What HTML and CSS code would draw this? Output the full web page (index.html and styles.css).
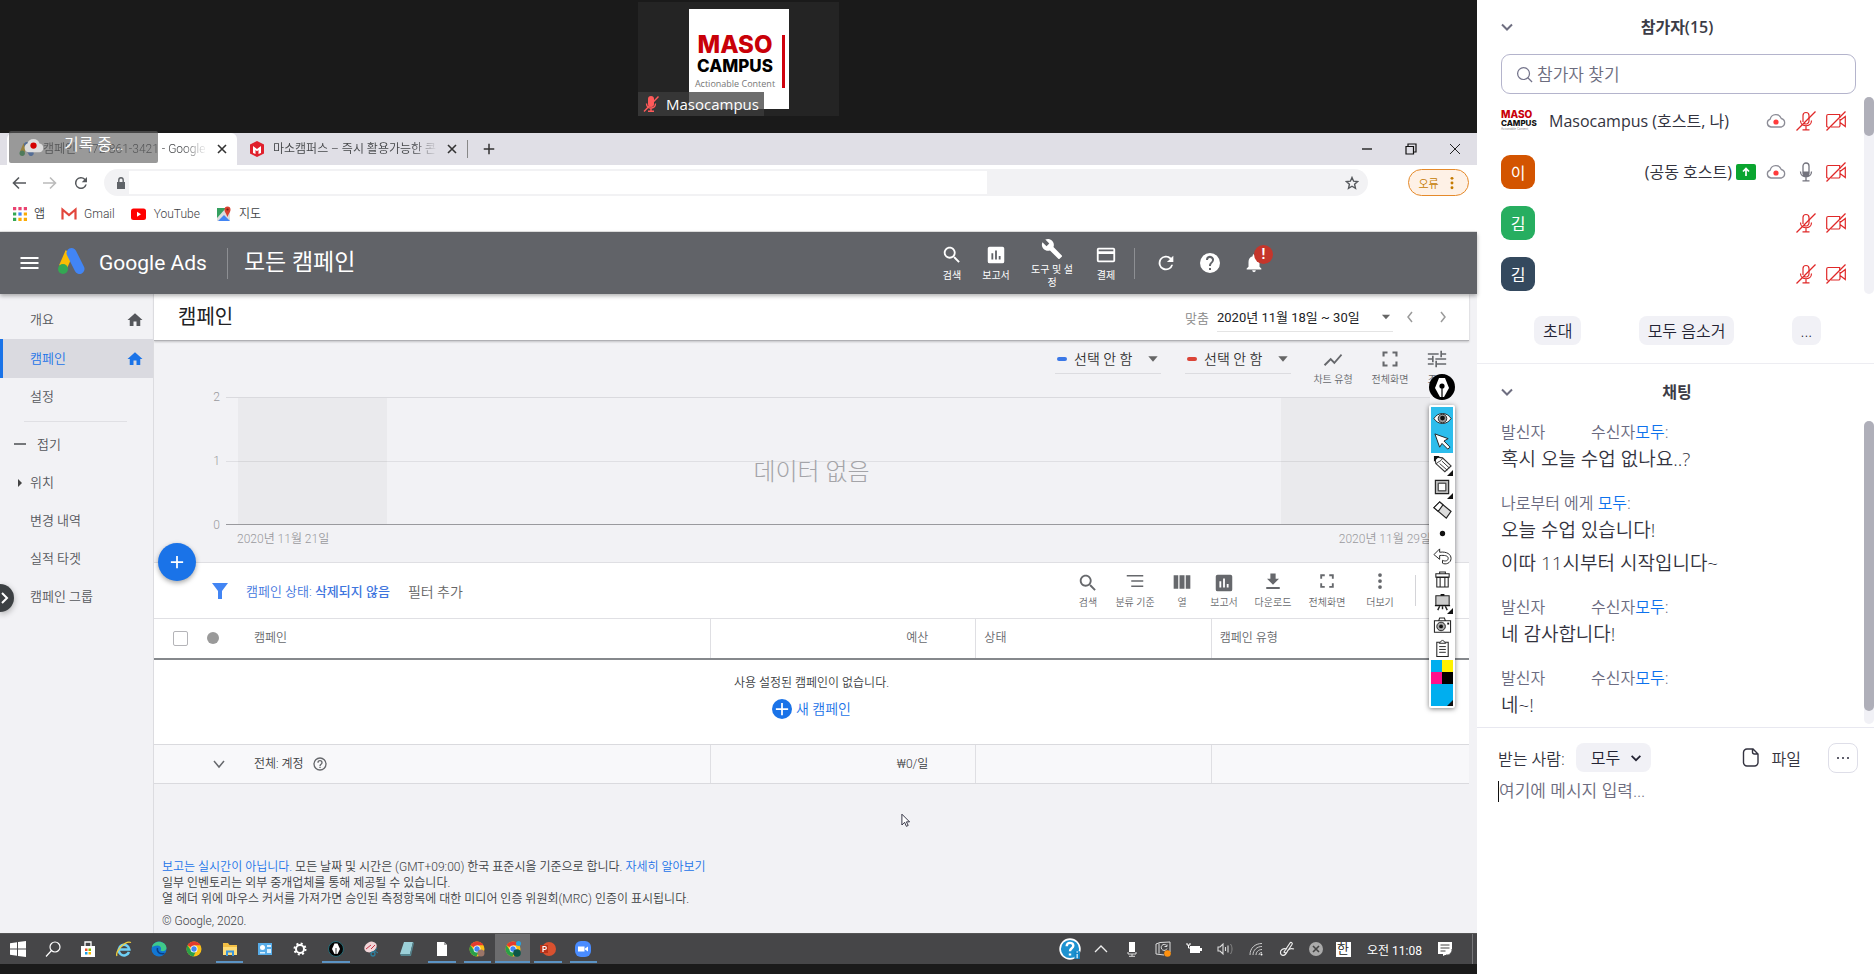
FILE: index.html
```html
<!DOCTYPE html>
<html lang="ko">
<head>
<meta charset="utf-8">
<title>Masocampus</title>
<link rel="stylesheet" href="styles.css">
</head>
<body>
<svg class="defs" aria-hidden="true">
  <symbol id="i-search" viewBox="0 0 24 24"><path d="M15.500 14h-.79l-.28-.27C15.410 12.590 16 11.110 16 9.500 16 5.910 13.090 3 9.500 3S3 5.910 3 9.500 5.910 16 9.500 16c1.610 0 3.090-.59 4.230-1.570l.27.28v.79l5 4.990L20.490 19l-4.990-5zm-6 0C7.010 14 5 11.990 5 9.500S7.010 5 9.500 5 14 7.010 14 9.500 11.990 14 9.500 14z"/></symbol>
  <symbol id="i-report" viewBox="0 0 24 24"><path d="M19 3H5a2 2 0 0 0-2 2v14a2 2 0 0 0 2 2h14a2 2 0 0 0 2-2V5a2 2 0 0 0-2-2zM9 17H7v-7h2v7zm4 0h-2V7h2v10zm4 0h-2v-4h2v4z"/></symbol>
  <symbol id="i-wrench" viewBox="0 0 24 24"><path d="M22.7 19l-9.1-9.1c.9-2.3.4-5-1.5-6.9-2-2-5-2.4-7.4-1.3L9 6 6 9 1.6 4.7C.4 7.1.9 10.1 2.9 12.1c1.9 1.9 4.6 2.4 6.9 1.5l9.1 9.1c.4.4 1 .4 1.4 0l2.3-2.3c.5-.4.5-1.1.1-1.4z"/></symbol>
  <symbol id="i-card" viewBox="0 0 24 24"><path d="M20 4H4a2 2 0 0 0-2 2v12a2 2 0 0 0 2 2h16a2 2 0 0 0 2-2V6a2 2 0 0 0-2-2zm0 14H4v-7h16v7zm0-10H4V6h16v2z"/></symbol>
  <symbol id="i-refresh" viewBox="0 0 24 24"><path d="M17.65 6.35A8 8 0 1 0 19.73 14h-2.08A6 6 0 1 1 12 6c1.66 0 3.14.69 4.22 1.78L13 11h7V4l-2.35 2.35z"/></symbol>
  <symbol id="i-help" viewBox="0 0 24 24"><path d="M12 2a10 10 0 1 0 0 20 10 10 0 0 0 0-20zm1 17h-2v-2h2v2zm2.07-7.75l-.9.92C13.45 12.9 13 13.5 13 15h-2v-.5c0-1.1.45-2.1 1.17-2.83l1.24-1.26A2 2 0 1 0 10 9H8a4 4 0 1 1 7.07 2.25z"/></symbol>
  <symbol id="i-helpo" viewBox="0 0 24 24"><path d="M11 18h2v-2h-2v2zm1-16a10 10 0 1 0 0 20 10 10 0 0 0 0-20zm0 18a8 8 0 1 1 0-16 8 8 0 0 1 0 16zm0-14a4 4 0 0 0-4 4h2a2 2 0 1 1 4 0c0 2-3 1.75-3 5h2c0-2.25 3-2.5 3-5a4 4 0 0 0-4-4z"/></symbol>
  <symbol id="i-bell" viewBox="0 0 24 24"><path d="M12 22a2 2 0 0 0 2-2h-4a2 2 0 0 0 2 2zm6-6v-5c0-3.07-1.64-5.64-4.5-6.32V4a1.5 1.5 0 0 0-3 0v.68C7.63 5.36 6 7.92 6 11v5l-2 2v1h16v-1l-2-2z"/></symbol>
  <symbol id="i-home" viewBox="0 0 24 24"><path d="M10 20v-6h4v6h5v-8h3L12 3 2 12h3v8z"/></symbol>
  <symbol id="i-down" viewBox="0 0 24 24"><path d="M5 8l7 8 7-8z"/></symbol>
  <symbol id="i-chev" viewBox="0 0 16 16"><path d="M3 5.500l5 5 5-5" fill="none" stroke="currentColor" stroke-width="2"/></symbol>
  <symbol id="i-line" viewBox="0 0 24 24"><path d="M3.500 18.500l6-6 4 4L22 6.900 20.600 5.500l-7.100 8-4-4L2 17z"/></symbol>
  <symbol id="i-full" viewBox="0 0 24 24"><path d="M3 9V3h6v2.500H5.500V9zM15 3h6v6h-2.500V5.500H15zM3 15h2.500v3.500H9V21H3zM18.500 15H21v6h-6v-2.500h3.500z"/></symbol>
  <symbol id="i-tune" viewBox="0 0 24 24"><path d="M1 5h13v2H1zM16 2h2v8h-2zM18 5h5v2h-5zM1 11h5v2H1zM6 8h2v8H6zM10 11h13v2H10zM1 17h7v2H1zM10 14h2v8h-2zM12 17h11v2H12z"/></symbol>
  <symbol id="i-seg" viewBox="0 0 24 24"><path d="M1 4h22v2H1zM7 11h16v2H7zM7 18h16v2H7z"/></symbol>
  <symbol id="i-cols" viewBox="0 0 24 24"><path d="M2 4h5.500v16H2zM9 4h6v16H9zM16.500 4H22v16h-5.500z"/></symbol>
  <symbol id="i-dl" viewBox="0 0 24 24"><path d="M20 9h-4.500V2h-7v7H4l8 8zM3 20v2.500h18V20z"/></symbol>
  <symbol id="i-more" viewBox="0 0 24 24"><circle cx="12" cy="4" r="2.500"/><circle cx="12" cy="12" r="2.500"/><circle cx="12" cy="20" r="2.500"/></symbol>
  <symbol id="i-x" viewBox="0 0 12 12"><path d="M2 2l8 8M10 2l-8 8" fill="none" stroke="currentColor" stroke-width="1.600"/></symbol>
  <symbol id="i-plus" viewBox="0 0 16 16"><path d="M8 1v14M1 8h14" fill="none" stroke="currentColor" stroke-width="2"/></symbol>
  <symbol id="i-ads" viewBox="0 0 30 28"><path d="M12.500 5L6 20" stroke="#fbbc04" stroke-width="8.500"/><circle cx="6" cy="22" r="5" fill="#34a853"/><path d="M14.500 6l8 16" stroke="#4285f4" stroke-width="10" stroke-linecap="round"/></symbol>
  <symbol id="i-cloud" viewBox="0 0 20 16"><path d="M5 14a4 4 0 0 1-.8-7.800A5.800 5.800 0 0 1 15.300 5.500 4.400 4.400 0 0 1 15.500 14z" fill="#fff" stroke="#8c8c96" stroke-width="1.300"/><circle cx="10" cy="9" r="2.600" fill="#ff3b3b"/></symbol>
  <symbol id="i-micoff" viewBox="0 0 20 20"><g fill="none" stroke="#e02828" stroke-width="1.200"><path d="M7 11V4.500a3 3 0 0 1 6 0V10a3 3 0 0 1-5 2.200M4.500 9.500c0 7 11 7 11 0M10 15v3.500M6.500 18.800h7"/><path d="M.5 19.500L19.500.5"/></g></symbol>
  <symbol id="i-mic" viewBox="0 0 20 20"><path d="M7 9.500h6V11a3 3 0 0 1-6 0z" fill="#73737d"/><path d="M7 4a3 3 0 0 1 6 0v7a3 3 0 0 1-6 0zM4.500 9.500c0 7 11 7 11 0M10 15v3.500M6.500 18.800h7" fill="none" stroke="#73737d" stroke-width="1.300"/></symbol>
  <symbol id="i-camoff" viewBox="0 0 20 20"><g fill="none" stroke="#e02828" stroke-width="1.200"><path d="M2.500 16.500L.7 15.500V5a1.500 1.500 0 0 1 1.500-1.500h11.500V7M14 8v6.500a1.500 1.500 0 0 1-1.500 1.500H5M14 9.500l5.300-4v10L14 11.500"/><path d="M.5 19.500L19.500.5"/></g></symbol>
  <symbol id="i-chrome" viewBox="0 0 16 16"><circle cx="8" cy="8" r="7.500" fill="#fbc116"/><path d="M8 8L1.500 4.200A7.500 7.500 0 0 1 14.500 4.200H8z" fill="#e33b2e"/><path d="M1.500 4.200A7.500 7.500 0 0 0 7.500 15.500L10.500 9 8 8H4z" fill="#2a9f48"/><circle cx="8" cy="8" r="3.500" fill="#fff"/><circle cx="8" cy="8" r="2.700" fill="#4285f4"/></symbol>
</svg>

<div class="meeting">
  <main class="stage">
    <header class="gallery">
      <figure class="tile">
        <div class="logo"><b>MASO</b><strong>CAMPUS</strong><small>Actionable Content</small><i></i></div>
        <figcaption><svg viewBox="0 0 16 16"><path d="M5 3a3 3 0 0 1 6 0v5a3 3 0 0 1-6 0z" fill="#ff5a5a"/><path d="M3.500 7.500c0 6 9 6 9 0M8 12v3M5 15.200h6M1 15.500L15.500.5" fill="none" stroke="#ff5a5a" stroke-width="1.400"/></svg>Masocampus</figcaption>
      </figure>
    </header>

    <section class="screen">
      <div class="recording"><svg class="rec-ic" viewBox="0 0 20 16"><path d="M5 15a4.500 4.500 0 0 1-.8-8.500 6 6 0 0 1 11.500 0A4.300 4.300 0 0 1 15.500 15z" fill="#ddd"/><circle cx="10" cy="8.500" r="3" fill="#d50000"/></svg><span>기록 중...</span></div>

      <div class="tabs">
        <div class="tab active"><svg class="s16"><use href="#i-ads"/></svg><span class="tab-name">캠페인 - 172-861-3421 - Google</span><button aria-label="탭 닫기"><svg class="s12"><use href="#i-x"/></svg></button></div>
        <div class="tab"><svg class="s16" viewBox="0 0 16 16"><path d="M8 0l7 3.500v9L8 16l-7-3.500v-9z" fill="#e0202c"/><path d="M4 12V5l4 3 4-3v7l-2.500 1V9L8 10.200 6.500 9v4z" fill="#fff"/></svg><span class="tab-name">마소캠퍼스 – 즉시 활용가능한 콘</span><button aria-label="탭 닫기"><svg class="s12"><use href="#i-x"/></svg></button></div>
        <button class="newtab" aria-label="새 탭"><svg class="s12"><use href="#i-plus"/></svg></button>
        <div class="winctl">
          <button aria-label="최소화"><svg class="s12" viewBox="0 0 12 12"><path d="M1 6h10" stroke="#111" stroke-width="1.300"/></svg></button>
          <button aria-label="복원"><svg class="s12" viewBox="0 0 12 12"><path d="M1 3.500h7.500V11H1zM3 3.500V1h8v8H8.500" fill="none" stroke="#111" stroke-width="1.200"/></svg></button>
          <button aria-label="닫기"><svg class="s12" viewBox="0 0 12 12"><path d="M1 1l10 10M11 1L1 11" stroke="#222"/></svg></button>
        </div>
      </div>

      <div class="toolbar">
        <button aria-label="뒤로"><svg class="s14" viewBox="0 0 14 14"><path d="M14 7H2M7 1.500L1.500 7 7 12.500" fill="none" stroke="#55585c" stroke-width="1.600"/></svg></button>
        <button aria-label="앞으로"><svg class="s14" viewBox="0 0 14 14"><path d="M0 7h12M7 1.500L12.500 7 7 12.500" fill="none" stroke="#bbb" stroke-width="1.600"/></svg></button>
        <button aria-label="새로고침"><svg class="s18 grey"><use href="#i-refresh"/></svg></button>
        <div class="address"><svg class="s12" viewBox="0 0 12 12"><path d="M2 5h8v7H2z" fill="#5f6368"/><path d="M3.800 5V3a2.200 2.200 0 0 1 4.400 0v2" fill="none" stroke="#5f6368" stroke-width="1.400"/></svg><input aria-label="주소"><button aria-label="북마크"><svg class="s14" viewBox="0 0 14 14"><path d="M7 1.500l1.600 3.700 4 .4-3 2.700.9 4L7 10.200l-3.500 2.100.9-4-3-2.700 4-.4z" fill="none" stroke="#55585c" stroke-width="1.400"/></svg></button></div>
        <button class="error">오류<svg class="s14"><use href="#i-more"/></svg></button>
      </div>

      <nav class="bookmarks">
        <a href="#"><svg class="s14" viewBox="0 0 13 13"><path d="M0 0h3v3H0zM5 0h3v3H5zM10 0h3v3h-3z" fill="#ea4370"/><path d="M0 5h3v3H0zM0 10h3v3H0z" fill="#34a853"/><path d="M5 5h3v3H5z" fill="#4285f4"/><path d="M10 5h3v3h-3zM5 10h3v3H5zM10 10h3v3h-3z" fill="#fbab04"/></svg>앱</a>
        <a href="#"><svg class="s16" viewBox="0 0 16 16"><path d="M1.500 13.500v-10L8 9l6.500-5.500v10" fill="none" stroke="#e2463c" stroke-width="2.200"/></svg>Gmail</a>
        <a href="#"><svg class="s16" viewBox="0 0 16 16"><rect x="0" y="2.500" width="15" height="11.500" rx="2.500" fill="#f00"/><path d="M6 5.700v5l4-2.500z" fill="#fff"/></svg>YouTube</a>
        <a href="#"><svg class="s16" viewBox="0 0 16 16"><path d="M1 2h13v13H1z" fill="#ddd"/><path d="M1 2h9L1 12z" fill="#34a060"/><path d="M2 15l6-6 6 6z" fill="#4285f4"/><path d="M11.500 11C10 7 8.500 6 8.500 3.500a3 3 0 0 1 6 0C14.500 6 13 7 11.500 11z" fill="#d9402f"/><circle cx="11.500" cy="3.500" r="1.100" fill="#7c1c12"/></svg>지도</a>
      </nav>

      <header class="ads-head">
        <button aria-label="메뉴"><svg class="burger" viewBox="0 0 18 14"><path d="M0 2h18M0 7h18M0 12h18" stroke="#fff" stroke-width="2"/></svg></button>
        <svg class="adslogo"><use href="#i-ads"/></svg>
        <span class="brand">Google Ads</span>
        <span class="vr"></span>
        <h1>모든 캠페인</h1>
        <div class="tools">
          <button class="t-a"><svg class="s22"><use href="#i-search"/></svg>검색</button>
          <button class="t-a"><svg class="s22"><use href="#i-report"/></svg>보고서</button>
          <button class="t-b"><svg class="s22"><use href="#i-wrench"/></svg>도구 및 설정</button>
          <button class="t-c"><svg class="s22"><use href="#i-card"/></svg>결제</button>
          <span class="vr"></span>
          <button class="t-a" aria-label="새로고침"><svg class="s22"><use href="#i-refresh"/></svg></button>
          <button class="t-a" aria-label="도움말"><svg class="s24"><use href="#i-help"/></svg></button>
          <button class="t-a bell" aria-label="알림"><svg class="s22"><use href="#i-bell"/></svg><b>!</b></button>
        </div>
      </header>

      <div class="workspace">
        <nav class="side">
          <a href="#">개요<svg class="s18"><use href="#i-home"/></svg></a>
          <a href="#" class="on">캠페인<svg class="s18"><use href="#i-home"/></svg></a>
          <a href="#">설정</a>
          <hr>
          <a href="#" class="fold"><svg class="s12" viewBox="0 0 12 12"><path d="M0 5h12" stroke="#55585c" stroke-width="1.600"/></svg>접기</a>
          <a href="#" class="sub"><svg class="s8" viewBox="0 0 8 8"><path d="M2 0l4 4-4 4z" fill="#444"/></svg>위치</a>
          <a href="#">변경 내역</a>
          <a href="#">실적 타겟</a>
          <a href="#">캠페인 그룹</a>
          <button class="handle" aria-label="펼치기"><svg class="s14" viewBox="0 0 14 14"><path d="M2 2l5 5-5 5" fill="none" stroke="#fff" stroke-width="2"/></svg></button>
        </nav>

        <div class="content">
          <div class="pagebar">
            <h2>캠페인</h2>
            <span class="custom">맞춤</span>
            <button class="range">2020년 11월 18일 ~ 30일<svg class="s14"><use href="#i-down"/></svg></button>
            <button class="step" aria-label="이전"><svg class="s14" viewBox="0 0 14 14"><path d="M9 2L5 7l4 5" fill="none" stroke="#9a9a9a" stroke-width="1.500"/></svg></button>
            <button class="step" aria-label="다음"><svg class="s14" viewBox="0 0 14 14"><path d="M5 2l4 5-4 5" fill="none" stroke="#9a9a9a" stroke-width="1.500"/></svg></button>
          </div>

          <section class="chart">
            <div class="chart-tools">
              <label class="pick"><i class="blue"></i><select aria-label="측정항목 1"><option>선택 안 함</option></select><svg class="s16"><use href="#i-down"/></svg></label>
              <label class="pick"><i class="red"></i><select aria-label="측정항목 2"><option>선택 안 함</option></select><svg class="s16"><use href="#i-down"/></svg></label>
              <button class="w56"><svg class="s22"><use href="#i-line"/></svg>차트 유형</button>
              <button class="w58"><svg class="s20"><use href="#i-full"/></svg>전체화면</button>
              <button class="w36"><svg class="s20"><use href="#i-tune"/></svg>조정</button>
            </div>
            <div class="plot-row">
              <div class="yaxis"><span>2</span><span>1</span><span>0</span></div>
              <div class="plot"><div class="shade"></div><div class="shade"></div></div>
            </div>
            <div class="xaxis"><span>2020년 11월 21일</span><span>2020년 11월 29일</span></div>
            <p class="nodata">데이터 없음</p>
            <button class="fab" aria-label="추가"><svg class="s14"><use href="#i-plus"/></svg></button>
          </section>

          <div class="filterbar">
            <svg class="s16" viewBox="0 0 16 16"><path d="M0 0h16L10 8v8H6V8z" fill="#4285f4"/></svg>
            <a href="#" class="status">캠페인 상태: <b>삭제되지 않음</b></a>
            <button class="addfilter">필터 추가</button>
            <div class="tt">
              <button class="w44"><svg class="s22"><use href="#i-search"/></svg>검색</button>
              <button class="w50"><svg class="s18"><use href="#i-seg"/></svg>분류 기준</button>
              <button class="w44"><svg class="s20"><use href="#i-cols"/></svg>열</button>
              <button class="w40"><svg class="s22"><use href="#i-report"/></svg>보고서</button>
              <button class="w58"><svg class="s18"><use href="#i-dl"/></svg>다운로드</button>
              <button class="w50"><svg class="s18"><use href="#i-full"/></svg>전체화면</button>
              <button class="w56"><svg class="s18"><use href="#i-more"/></svg>더보기</button>
              <span class="vr"></span>
            </div>
          </div>

          <table>
            <colgroup><col class="c1"><col class="c2"><col class="c3"><col></colgroup>
            <thead><tr><th><div class="namecell"><input type="checkbox" aria-label="모두 선택"><i class="dot"></i>캠페인</div></th><th class="num">예산</th><th>상태</th><th>캠페인 유형</th></tr></thead>
            <tbody><tr class="empty"><td colspan="4">사용 설정된 캠페인이 없습니다.<a href="#"><i><svg class="s14"><use href="#i-plus"/></svg></i>새 캠페인</a></td></tr></tbody>
            <tfoot><tr><td><div class="totalcell"><svg class="s16" viewBox="0 0 16 16"><path d="M3 5l5 6 5-6" fill="none" stroke="#66686c" stroke-width="1.500"/></svg><span>전체: 계정</span><svg class="s16"><use href="#i-helpo"/></svg></div></td><td class="num">₩0/일</td><td></td><td></td></tr></tfoot>
          </table>

          <footer class="notes">
            <p><a href="#">보고는 실시간이 아닙니다.</a> 모든 날짜 및 시간은 (GMT+09:00) 한국 표준시을 기준으로 합니다. <a href="#">자세히 알아보기</a><br>일부 인벤토리는 외부 중개업체를 통해 제공될 수 있습니다.<br>열 헤더 위에 마우스 커서를 가져가면 승인된 측정항목에 대한 미디어 인증 위원회(MRC) 인증이 표시됩니다.</p>
            <p>© Google, 2020.</p>
          </footer>
        </div>
      </div>

      <div class="palette">
        <svg class="nib" viewBox="0 0 26 26"><circle cx="13" cy="13" r="13" fill="#000"/><path d="M10 4h6l4 10-5 9h-4L6 14z" fill="#fff"/><circle cx="13" cy="12" r="2.600" fill="#000"/><path d="M13 12v12" stroke="#000" stroke-width="1.200"/></svg>
        <div class="pal">
          <button class="sel" aria-label="보기"><svg viewBox="0 0 20 20"><path d="M1 10c4-7 14-7 18 0-4 7-14 7-18 0z" fill="#fff" stroke="#222"/><circle cx="10" cy="10" r="4.500" fill="#999" stroke="#222"/><circle cx="10" cy="9.500" r="2.500" fill="#111"/></svg></button>
          <button class="sel" aria-label="선택"><svg viewBox="0 0 20 20"><path d="M2 2l14 5-4.500 2.500L18 16l-2.500 2L9.500 12 7 16z" fill="#fff" stroke="#222"/></svg></button>
          <button class="tri" aria-label="연필"><svg viewBox="0 0 20 20"><path d="M2 2l8 1 9 8.500-6.500 6L3 9z" fill="#fff" stroke="#333" stroke-width="1.200"/><path d="M3.500 9.500C4 7 9 7 10 3.500M7 9l8 7M9.500 6.500l7.500 7" fill="none" stroke="#333"/><path d="M1 1h6L1 7z"/></svg></button>
          <button class="tri" aria-label="도형"><svg viewBox="0 0 20 20"><path d="M2.500 2.500h14v14h-14z" fill="#bbb" stroke="#222" stroke-width="1.200"/><path d="M5.500 5.500h8v8h-8z" fill="#fff" stroke="#222"/></svg></button>
          <button aria-label="지우개"><svg viewBox="0 0 20 20"><path d="M7 1l12 10-5 7L1 7z" fill="#ddd" stroke="#222" stroke-width="1.200"/><path d="M7 1l3.500 3-5 7L1 7z" fill="#fff" stroke="#222" stroke-width="1.200"/></svg></button>
          <button aria-label="굵기"><svg viewBox="0 0 20 20"><circle cx="10" cy="10" r="2.800"/></svg></button>
          <button aria-label="실행 취소"><svg viewBox="0 0 20 20"><path d="M1 8l6-6v3.500c8-1 12 2.500 12 6.500 0 5-6 7-9 5v-3c3 1.500 6 .5 6-2 0-3-4-3.500-9-3V13z" fill="#fff" stroke="#222"/></svg></button>
          <button aria-label="휴지통"><svg viewBox="0 0 20 20"><path d="M7 4V2h6v2M4 8h12v10H4zM3 4h14v3.500H3zM7.500 8v10M12.500 8v10" fill="none" stroke="#222" stroke-width="1.100"/></svg></button>
          <button class="tri" aria-label="칠판"><svg viewBox="0 0 20 20"><path d="M7 14l-2 4M13 14l2 4M10 14v3" stroke="#222" stroke-width="1.500"/><path d="M3 3h14v10H3z" fill="#ccc" stroke="#222" stroke-width="1.100"/><path d="M8 1h4v2H8zM2 12.500h16v1.500H2z"/></svg></button>
          <button aria-label="카메라"><svg viewBox="0 0 20 20"><path d="M1.500 5h17v12h-17zM6 5l1-3h5l1 3" fill="#fff" stroke="#222" stroke-width="1.100"/><circle cx="8.500" cy="11" r="4.500" fill="#aaa" stroke="#222"/><circle cx="8.500" cy="11" r="2"/><path d="M15 7h2v2h-2z"/></svg></button>
          <button aria-label="클립보드"><svg viewBox="0 0 20 20"><path d="M4 3.500h12v15H4z" fill="#fff" stroke="#222" stroke-width="1.100"/><path d="M6.500 4.500L10 1l3.500 3.500z" fill="#fff" stroke="#222"/><path d="M6.500 8h7M6.500 11h7M6.500 14h7" stroke="#222"/></svg></button>
          <div class="swatches"><i class="cy"></i><i class="ye"></i><i class="ma"></i><i class="bk"></i><i class="cur tri"></i></div>
        </div>
      </div>

      <svg class="cursor" viewBox="0 0 10 16"><path d="M1 1v12l3-3 2 4.500 2-1-2-4h3.500z" fill="#fff" stroke="#223"/></svg>

      <div class="taskbar">
        <div class="apps">
          <button aria-label="시작"><svg viewBox="0 0 16 16"><path d="M0 2.200L7 1.200v6.300H0zM8 1l8-1v7.500H8zM0 8.500h7v6.300L0 13.800zM8 8.500h8V16l-8-1z" fill="#fff"/></svg></button>
          <button aria-label="검색"><svg viewBox="0 0 16 16"><circle cx="10" cy="6" r="5" fill="none" stroke="#fff" stroke-width="1.200"/><path d="M6.500 9.500L1 15.500" stroke="#fff" stroke-width="1.200"/></svg></button>
          <button aria-label="스토어"><svg viewBox="0 0 16 16"><path d="M5 5V1h6v4" fill="none" stroke="#fff" stroke-width="1.300"/><path d="M1 5h14v11H1z" fill="#fff"/><path d="M5 7.500h2.500V10H5z" fill="#e8502c"/><path d="M8.500 7.500H11V10H8.500z" fill="#7dba00"/><path d="M5 11h2.500v2.500H5z" fill="#1aa0e8"/><path d="M8.500 11H11v2.500H8.500z" fill="#fbb900"/></svg></button>
          <button aria-label="Internet Explorer"><svg viewBox="0 0 16 16"><path d="M13 11a5.300 5.300 0 1 1 .3-2.500H3.500" fill="none" stroke="#6fd0f5" stroke-width="2.600"/><path d="M1 15C-1 11 9-1 15 1.500" fill="none" stroke="#f2cf3c" stroke-width="1.300"/></svg></button>
          <button aria-label="Edge"><svg viewBox="0 0 16 16"><circle cx="8" cy="8" r="7.500" fill="#1277d4"/><path d="M1 6C3-1.500 15-.5 15.500 7c0 3-4 4-6 2.500 1.500-2 0-5-3-5S1.500 6 1 6z" fill="#3fc98a"/><path d="M6.500 7c-1 4 2 6.500 7 5.500" fill="none" stroke="#0b3f83" stroke-width="1.500"/></svg></button>
          <button aria-label="Chrome"><svg><use href="#i-chrome"/></svg></button>
          <button class="run" aria-label="탐색기"><svg viewBox="0 0 16 16"><path d="M1 2h5l1.500 2H15v10H1z" fill="#f3bf45"/><path d="M1 6h14v8H1z" fill="#ffdd78"/><path d="M4 15V9.500h8V15h-2v-3.500H6V15z" fill="#3c96dc"/></svg></button>
          <button aria-label="제어판"><svg viewBox="0 0 16 16"><path d="M1 2h14v12H1z" fill="#57ace8"/><circle cx="5.500" cy="6.500" r="2.500" fill="#fff"/><path d="M10 4h4v2h-4zM10 8h4v4h-4zM3 11h5v1.500H3z" fill="#d8efff"/></svg></button>
          <button aria-label="설정"><svg viewBox="0 0 16 16"><circle cx="8" cy="8" r="4" fill="none" stroke="#fff" stroke-width="2"/><circle cx="8" cy="8" r="5.500" fill="none" stroke="#fff" stroke-width="2" stroke-dasharray="2 2.320"/></svg></button>
          <button class="run" aria-label="펜"><svg viewBox="0 0 16 16"><circle cx="8" cy="8" r="7.500" fill="#050505" stroke="#256a75"/><path d="M6.500 2.500h3L12 8l-2.500 5h-3L4 8z" fill="#fff"/><circle cx="8" cy="7" r="1.300"/><path d="M8 7v7" stroke="#000" stroke-width=".8"/></svg></button>
          <button aria-label="캡처"><svg viewBox="0 0 16 16"><ellipse cx="7.500" cy="6" rx="6.500" ry="5" transform="rotate(-30 7.500 6)" fill="#f1d5d8"/><path d="M3 8l5-4M8 8l4-4" stroke="#c33044"/><circle cx="10" cy="13" r="2" fill="none" stroke="#2d7f9e" stroke-width="1.300"/><path d="M11 11l3-4M12 10l3 2" stroke="#2d7f9e"/></svg></button>
          <button aria-label="메모장"><svg viewBox="0 0 16 16"><path d="M5 1h9l-3 12H1z" fill="#9cd0d8"/><path d="M14 1l1 1-3 13H2l-1-2h10z" fill="#55858f"/></svg></button>
          <button class="run" aria-label="문서"><svg viewBox="0 0 16 16"><path d="M3 1h7l3 3v11H3z" fill="#fff"/><path d="M10 1l3 3h-3z" fill="#aaa"/></svg></button>
          <button class="run" aria-label="Chrome 프로필 1"><svg viewBox="0 0 16 16"><use href="#i-chrome"/><circle cx="12" cy="12" r="3.500" fill="#9b7568"/></svg></button>
          <button class="run now" aria-label="Chrome 프로필 2"><svg viewBox="0 0 16 16"><use href="#i-chrome"/><circle cx="12" cy="12" r="3.800" fill="#0c5648"/><circle cx="13.500" cy="2.500" r="2.500" fill="#29a3dd"/></svg></button>
          <button class="run" aria-label="PowerPoint"><svg viewBox="0 0 16 16"><circle cx="9" cy="8" r="7" fill="#d9512f"/><path d="M0 4h8v8H0z" fill="#b9331a"/><path d="M3 11V5.500h1.800a1.500 1.500 0 0 1 0 3H3" fill="none" stroke="#fff" stroke-width="1.200"/></svg></button>
          <button class="run" aria-label="Zoom"><svg viewBox="0 0 16 16"><rect width="16" height="16" rx="6" fill="#4a8cff"/><path d="M3 5.500h6.500v5H3zM10 7.500l3-2v5l-3-2z" fill="#fff"/></svg></button>
        </div>
        <div class="tray">
          <button aria-label="도움말"><svg class="s20" viewBox="0 0 20 20"><circle cx="10" cy="10" r="9" fill="#1d92d0" stroke="#fff" stroke-width="1.500"/><path d="M7 7.500c0-4 6-4 6-.5 0 2.500-3 2-3 5M10 14v2" fill="none" stroke="#fff" stroke-width="2.200"/><path d="M14 12h5v7h-5z" fill="#1486c8"/><path d="M16.500 14.500v4M16.500 12v1.300" stroke="#fff"/></svg></button>
          <button aria-label="숨겨진 아이콘"><svg viewBox="0 0 16 16"><path d="M2 11l6-6 6 6" fill="none" stroke="#eee" stroke-width="1.300"/></svg></button>
          <button aria-label="마이크"><svg viewBox="0 0 16 16"><path d="M5 1h6v10H5z" fill="#fff"/><path d="M4 11v2h8v-2M8 13v2M5 15.300h6" fill="none" stroke="#ddd"/></svg></button>
          <button aria-label="업데이트"><svg viewBox="0 0 16 16"><path d="M1 3l4-1.500L15 1v10M1 3v10l8 1M4 2.500v10" fill="none" stroke="#ddd"/><path d="M11.500 4.500a3 3 0 1 0 .5 3M12 3.500v2H9.500" fill="none" stroke="#ddd"/><circle cx="12.500" cy="12.500" r="3.300" fill="#ff9210"/></svg></button>
          <button aria-label="배터리"><svg viewBox="0 0 16 16"><path d="M4 5h10v7H4zM14 7h2v3h-2z" fill="#fff"/><path d="M1 2v2h3V2M2.500 4v3H5" fill="none" stroke="#fff"/></svg></button>
          <button aria-label="소리"><svg viewBox="0 0 16 16"><path d="M1 6h2l3-3v10l-3-3H1zM8.500 6v4M11 4.500v7" fill="none" stroke="#ddd" stroke-width="1.100"/><path d="M13.500 3c2 3 2 7 0 10" fill="none" stroke="#888"/></svg></button>
          <button aria-label="네트워크"><svg viewBox="0 0 16 16"><path d="M2 14C2 7 7 2.500 14 2.500M5 14c0-5 4-8.500 9-8.500M8 14c0-3 2.500-5.500 6-5.500M11 14c0-1.500 1-2.500 3-2.500" fill="none" stroke="#ccc"/><circle cx="13.500" cy="13.500" r="1" fill="#fff"/></svg></button>
          <button aria-label="펜"><svg viewBox="0 0 16 16"><path d="M5 11l6-9c1-1.500 3 0 2 1.500l-6 9zM8 8c-4-1-7 1-6.500 4S6 15.500 8 11c1-3 4-4 7-3" fill="none" stroke="#eee" stroke-width="1.200"/></svg></button>
          <button class="narrow" aria-label="오류"><svg viewBox="0 0 16 16"><circle cx="8" cy="8" r="7" fill="#aaa"/><path d="M5 5l6 6M11 5l-6 6" stroke="#444" stroke-width="1.600"/></svg></button>
          <button class="ime" aria-label="한글">한</button>
          <time>오전 11:08</time>
          <button class="narrow" aria-label="알림"><svg viewBox="0 0 16 16"><path d="M1 1h14v9l-3 4H8L6 15v-2H1z" fill="#fff"/><path d="M3.500 4h9M3.500 7h9M3.500 10h5" stroke="#444"/><path d="M9 14c4 0 6-2 6-6" fill="none" stroke="#555"/></svg></button>
        </div>
      </div>
    </section>
  </main>

  <aside class="panel">
    <section class="people">
      <header class="phead"><button aria-label="접기"><svg class="s16"><use href="#i-chev"/></svg></button><h2>참가자(15)</h2></header>
      <label class="find"><svg viewBox="0 0 18 18"><circle cx="8" cy="8" r="6.300" fill="none" stroke="#73738a" stroke-width="1.300"/><path d="M12.500 12.500L17 17" stroke="#73738a" stroke-width="1.300"/></svg><input placeholder="참가자 찾기" aria-label="참가자 찾기"></label>
      <div class="scroller">
        <ul>
          <li><div class="minilogo"><b>MASO</b><strong>CAMPUS</strong><small>Actionable Content</small></div><span class="who">Masocampus (호스트, 나)</span><svg class="s20"><use href="#i-cloud"/></svg><svg class="s20"><use href="#i-micoff"/></svg><svg class="s20"><use href="#i-camoff"/></svg></li>
          <li><span class="av a1">이</span><span class="who right">(공동 호스트)</span><svg class="share" viewBox="0 0 20 16"><rect width="20" height="16" rx="2" fill="#0aa52f"/><path d="M10 12V5M7 7.500l3-3 3 3" fill="none" stroke="#fff" stroke-width="1.700"/></svg><svg class="s20"><use href="#i-cloud"/></svg><svg class="s20"><use href="#i-mic"/></svg><svg class="s20"><use href="#i-camoff"/></svg></li>
          <li><span class="av a2">김</span><span class="who"></span><svg class="s20"><use href="#i-micoff"/></svg><svg class="s20"><use href="#i-camoff"/></svg></li>
          <li><span class="av a3">김</span><span class="who"></span><svg class="s20"><use href="#i-micoff"/></svg><svg class="s20"><use href="#i-camoff"/></svg></li>
        </ul>
        <div class="bar"><i class="thumb-a"></i></div>
      </div>
      <div class="acts"><button>초대</button><button>모두 음소거</button><button>...</button></div>
    </section>

    <section class="chat">
      <header class="phead"><button aria-label="접기"><svg class="s16"><use href="#i-chev"/></svg></button><h2>채팅</h2></header>
      <div class="scroller">
        <div class="log">
          <article><h3><span class="from">발신자</span>수신자<a href="#">모두</a>:</h3><p>혹시 오늘 수업 없나요..?</p></article>
          <article><h3>나로부터 에게 <a href="#">모두</a>:</h3><p>오늘 수업 있습니다!</p><p>이따 11시부터 시작입니다~</p></article>
          <article><h3><span class="from">발신자</span>수신자<a href="#">모두</a>:</h3><p>네 감사합니다!</p></article>
          <article><h3><span class="from">발신자</span>수신자<a href="#">모두</a>:</h3><p>네~!</p></article>
        </div>
        <div class="bar"><i class="thumb-b"></i></div>
      </div>
    </section>

    <section class="compose">
      <div class="to">
        <label for="to">받는 사람:</label>
        <span class="tosel"><select id="to"><option>모두</option></select><svg class="s14"><use href="#i-chev"/></svg></span>
        <button class="file"><svg viewBox="0 0 18 20"><path d="M11 1H5a3.500 3.500 0 0 0-3.500 3.500v10A3.500 3.500 0 0 0 5 18h7.500a3.500 3.500 0 0 0 3.500-3.500V6zM10.500 1v3a2 2 0 0 0 2 2H16" fill="none" stroke="#333340" stroke-width="1.400"/></svg>파일</button>
        <button class="dots" aria-label="더보기"><svg class="s14" viewBox="0 0 14 14"><path d="M1 6h2v2H1zM6 6h2v2H6zM11 6h2v2h-2z" fill="#60606c"/></svg></button>
      </div>
      <textarea placeholder="여기에 메시지 입력..." aria-label="메시지"></textarea>
    </section>
  </aside>
</div>
</body>
</html>
```

FILE: styles.css
```css
* { box-sizing: border-box; }
body { margin: 0; background: #1a1a1a; font-family: Roboto, "Noto Sans CJK KR", sans-serif; font-size: 12px; color: #3c4043; }
button, input, select, textarea { font: inherit; color: inherit; border: 0; background: none; padding: 0; margin: 0; outline: 0; }
button { display: inline-flex; align-items: center; justify-content: center; }
select { appearance: none; }
h1, h2, h3, p, ul, figure { margin: 0; padding: 0; font-weight: 400; }
a { color: #1a73e8; text-decoration: none; }
i { font-style: normal; }
svg { fill: currentColor; flex: none; display: block; }
.defs { position: absolute; width: 0; height: 0; }
.s8 { width: 8px; height: 8px; }
.s12 { width: 12px; height: 12px; }
.s14 { width: 14px; height: 14px; }
.s16 { width: 16px; height: 16px; }
.s18 { width: 18px; height: 18px; }
.s20 { width: 20px; height: 20px; }
.s22 { width: 22px; height: 22px; }
.s24 { width: 24px; height: 24px; }
.grey { color: #55585c; }

.meeting { display: grid; grid-template-columns: minmax(0, 1fr) 397px; min-height: 100vh; }
.stage { display: flex; flex-direction: column; padding-bottom: 10px; background: #1a1a1a; }

/* Speaker gallery */
.gallery { height: 133px; display: flex; justify-content: center; padding-top: 2px; }
.tile { position: relative; width: 201px; height: 114px; background: #242424; display: flex; justify-content: center; padding-top: 7px; }
.logo { position: relative; width: 100px; height: 100px; background: #fff; display: flex; flex-direction: column; align-items: center; padding: 23px 7px 0 0; font-family: Inter, sans-serif; }
.logo b { font-size: 24px; line-height: 25px; font-weight: 800; color: #c90008; }
.logo strong { font-size: 17px; line-height: 19px; font-weight: 800; color: #000; }
.logo small { font: 9px/15px "Open Sans", sans-serif; color: #777; white-space: nowrap; }
.logo i { position: absolute; right: 4px; top: 26px; width: 3px; height: 53px; background: #d0000c; }
.tile figcaption { position: absolute; left: 0; bottom: 0; height: 24px; padding: 0 5px; display: flex; align-items: center; gap: 7px; background: rgba(60, 60, 60, .75); color: #fff; font: 15px/24px "Open Sans", sans-serif; }
.tile figcaption svg { width: 16px; height: 16px; }

/* Browser window */
.screen { position: relative; flex: 1; display: flex; flex-direction: column; background: #f2f2f5; font-weight: 350; }
.recording { position: absolute; z-index: 3; left: 9px; top: -2px; width: 149px; height: 32px; padding: 0 14px; display: flex; gap: 20px; background: rgba(95, 95, 95, .64); border-radius: 2px; color: #fff; font-size: 16px; line-height: 28px; }
.rec-ic { width: 21px; height: 18px; margin-top: 5px; }
.tabs { height: 32px; display: flex; align-items: center; background: #e0dfe6; padding-left: 7px; }
.tab { width: 230px; height: 32px; display: flex; align-items: center; gap: 8px; padding: 0 9px 0 12px; color: #444649; }
.tab.active { background: #fff; border-radius: 6px 6px 0 0; }
.tab-name { flex: 1; overflow: hidden; white-space: nowrap; line-height: 18px; mask-image: linear-gradient(90deg, #000 85%, transparent); }
.tab button, .newtab { color: #333; }
.newtab { padding: 0 15px; height: 18px; border-left: 1px solid #888; }
.winctl { margin-left: auto; display: flex; padding-right: 16px; gap: 32px; }
.toolbar { height: 35px; display: flex; align-items: center; background: #fff; padding: 0 8px 0 12px; gap: 17px; }
.toolbar > button { width: 14px; }
.address { flex: 1; height: 27px; display: flex; align-items: center; background: #f2f2f4; border-radius: 14px; padding: 0 9px 0 11px; margin: 0 23px 0 -1px; gap: 2px; }
.address input { flex: 0 0 69%; height: 23px; background: #fff; }
.address button { margin-left: auto; }
.toolbar > .error { width: 61px; height: 27px; border: 1px solid #e58a2b; border-radius: 14px; background: #fef1e6; color: #c47a00; font-size: 11px; gap: 6px; }
.bookmarks { height: 32px; display: flex; align-items: center; gap: 16px; padding: 0 0 4px 13px; background: #fff; border-bottom: 1px solid #e4e4e4; }
.bookmarks a { display: flex; align-items: center; gap: 7px; color: #3c4043; font-size: 12px; line-height: 18px; }

/* Product header */
.ads-head { position: relative; z-index: 1; height: 62px; display: flex; align-items: center; background: #616368; color: #fff; padding-left: 20px; box-shadow: 0 2px 4px rgba(0, 0, 0, .3); font-weight: 400; }
.burger { width: 19px; height: 14px; }
.adslogo { width: 30px; height: 28px; margin: 0 12px 4px 18px; }
.brand { font-size: 21px; line-height: 28px; }
.vr { width: 1px; height: 31px; background: #8d8f93; }
.ads-head > .vr { margin: 0 16px 0 20px; }
.ads-head h1 { font-size: 23px; line-height: 30px; }
.tools { margin-left: auto; display: flex; align-items: center; padding-right: 201px; }
.tools button { flex-direction: column; font-size: 10px; line-height: 13px; gap: 3px; }
.tools .vr { margin: 0 9px 0 8px; }
.t-a { width: 44px; }
.t-b { width: 68px; padding: 0 10px; }
.t-c { width: 40px; }
.bell { position: relative; }
.bell b { position: absolute; right: 3px; top: -7px; width: 19px; height: 19px; border-radius: 50%; background: #c5352b; font-size: 14px; line-height: 19px; }

/* Side navigation */
.workspace { flex: 1; display: grid; grid-template-columns: 154px minmax(0, 1fr); padding-right: 8px; }
.side { position: relative; border-right: 1px solid #dcdce0; padding-top: 7px; }
.side a { display: flex; align-items: center; justify-content: space-between; height: 38px; padding: 0 9px 0 30px; color: #55575c; font-size: 13px; line-height: 20px; }
.side a.on { height: 39px; background: #dadae0; color: #1a73e8; padding-left: 27px; border-left: 3px solid #1a73e8; }
.side hr { border: 0; border-top: 1px solid #e0e0e4; margin: 5px 26px 4px 24px; }
.side .fold, .side .sub { justify-content: flex-start; }
.side .fold { padding-left: 14px; gap: 11px; }
.side .sub { padding-left: 16px; gap: 6px; }
.handle { position: absolute; left: 0; top: 290px; width: 14px; height: 28px; border-radius: 0 14px 14px 0; background: #3c4043; box-shadow: 0 2px 6px rgba(0, 0, 0, .3); }

/* Campaign page */
.content { background: #f2f2f5; }
.pagebar { height: 47px; display: flex; align-items: center; background: #fff; padding: 0 10px 0 24px; border-bottom: 1px solid #b0b0b4; box-shadow: 0 1px 2px rgba(0, 0, 0, .2); }
.pagebar h2 { flex: 1; font-size: 20px; line-height: 28px; color: #202124; }
.custom { color: #888; font-size: 13px; margin-right: 8px; }
.range { width: 176px; height: 30px; justify-content: space-between; border-bottom: 1px solid #e4e4e4; color: #202124; font-size: 13px; font-weight: 400; }
.range svg { color: #666; }
.step { width: 33px; height: 24px; }
.chart { position: relative; height: 222px; border-bottom: 1px solid #dfdfe3; }
.chart-tools { height: 56px; display: flex; align-items: flex-start; justify-content: flex-end; padding: 8px 14px 0 0; }
.chart-tools button, .tt button { flex-direction: column; justify-content: space-between; height: 38px; font-size: 10px; line-height: 14px; color: #66686c; }
.pick { width: 106px; height: 25px; display: flex; align-items: center; border-bottom: 1px solid #dcdce0; margin-right: 24px; padding: 0 0 4px 2px; color: #666; }
.pick + .pick { margin-right: 14px; }
.pick i { width: 10px; height: 4px; border-radius: 2px; margin-right: 7px; }
.pick .blue { background: #3b78e7; }
.pick .red { background: #db4437; }
.pick select { flex: 1; min-width: 0; font-size: 14px; line-height: 20px; color: #333; }
.w36 { width: 36px; }
.w40 { width: 40px; }
.w44 { width: 44px; }
.w50 { width: 50px; }
.w56 { width: 56px; }
.w58 { width: 58px; }
.plot-row { display: flex; gap: 6px; padding: 0 39px 0 58px; }
.yaxis { width: 8px; display: flex; flex-direction: column; justify-content: space-between; margin: -7px 0; color: #9a9a9e; line-height: 14px; text-align: right; }
.plot { flex: 1; height: 128px; display: flex; justify-content: space-between; padding-left: 12px; border-top: 1px solid #dadade; border-bottom: 1px solid #9a9a9e; background: linear-gradient(#dfdfe3, #dfdfe3) 0 50% / 100% 1px no-repeat; }
.shade { width: 149px; background: rgba(0, 0, 0, .03); }
.xaxis { display: flex; justify-content: space-between; padding: 5px 38px 0 83px; color: #9a9a9e; line-height: 18px; }
.nodata { position: absolute; left: 0; right: 0; top: 114px; text-align: center; font-size: 24px; line-height: 34px; color: #a4a4a8; font-weight: 300; }
.fab { position: absolute; left: 4px; bottom: -19px; width: 38px; height: 38px; border-radius: 50%; background: #1a73e8; color: #fff; box-shadow: 0 2px 5px rgba(0, 0, 0, .35); }
.filterbar { height: 55px; display: flex; align-items: center; background: #fff; padding-left: 58px; }
.status { margin: 0 18px 0 18px; color: #3f76de; font-size: 13px; }
.status b { font-weight: 500; }
.addfilter { color: #666; font-size: 14px; }
.tt { margin-left: auto; display: flex; align-items: center; padding-right: 53px; }
.tt .vr { margin-left: 7px; background: #d4d4d8; }

table { width: 100%; table-layout: fixed; border-collapse: collapse; background: #fff; font-size: 12px; }
.c1 { width: 42.3%; }
.c2 { width: 20.2%; }
.c3 { width: 17.9%; }
th, td { padding: 0 8px; text-align: left; font-weight: 350; line-height: 18px; }
th { height: 40px; color: #66686c; border-top: 1px solid #e0e0e4; border-bottom: 2px solid #85888c; }
th + th, td + td { border-left: 1px solid #dfdfe3; }
.num { text-align: right; padding-right: 47px; }
.namecell, .totalcell { display: flex; align-items: center; }
.namecell input { appearance: none; width: 15px; height: 15px; border: 1px solid #b4b4b8; border-radius: 2px; margin: 0 19px 0 11px; }
.dot { width: 12px; height: 12px; border-radius: 50%; background: #9a9a9a; margin-right: 35px; }
.empty td { height: 86px; text-align: center; vertical-align: top; padding-top: 14px; }
.empty a { display: flex; align-items: center; justify-content: center; gap: 4px; margin-top: 6px; font-size: 14px; line-height: 22px; }
.empty a i { width: 20px; height: 20px; border-radius: 50%; background: #1a73e8; color: #fff; display: flex; align-items: center; justify-content: center; }
tfoot td { height: 39px; background: #f8f8fa; border-top: 1px solid #dadade; border-bottom: 1px solid #dadade; }
.totalcell { padding-left: 49px; }
.totalcell span { margin: 0 8px 0 27px; }
.totalcell svg { color: #66686c; }
.notes { padding: 75px 0 0 8px; line-height: 16px; }
.notes p { font-weight: 350; }
.notes p + p { margin-top: 6px; }

/* Drawing palette */
.palette { position: absolute; z-index: 4; right: 22px; top: 241px; width: 26px; }
.nib { width: 26px; height: 26px; }
.pal { margin-top: 5px; padding: 2px; background: #fff; border-radius: 2px; box-shadow: 0 1px 5px rgba(0, 0, 0, .5); }
.pal button { position: relative; display: flex; width: 100%; height: 23px; color: #111; }
.pal button svg { width: 19px; height: 19px; }
.pal .sel { background: #2dbdec; }
.tri::after { content: ""; position: absolute; right: 0; bottom: 0; border: 3px solid; border-color: transparent #111 #111 transparent; }
.swatches { display: grid; grid-template-columns: 1fr 1fr; grid-template-rows: 12px 12px 22px; }
.cy { background: #00aeef; }
.ye { background: #fff200; }
.ma { background: #ff0f8b; }
.bk { background: #000; }
.cur { position: relative; grid-column: 1 / 3; background: #00aeef; }
.cursor { position: absolute; left: 61%; top: 680px; width: 9px; height: 15px; }

/* Taskbar */
.taskbar { height: 31px; display: flex; justify-content: space-between; background: #464648; color: #fff; border-top: 1px solid #555; }
.apps { display: grid; grid-template-columns: repeat(17, 1fr); width: 601px; }
.taskbar button svg { width: 16px; height: 16px; }
.apps .run { box-shadow: inset 0 -2px #5b93c4; margin: 0 4px 1px; }
.apps .now { background: #6c6c6e; margin: 0 0 1px; }
.tray { display: flex; align-items: center; border-right: 1px solid #77777a; margin-right: 4px; padding-right: 13px; }
.tray button { width: 31px; }
.tray .narrow { width: 28px; }
.taskbar .tray .s20 { width: 22px; height: 22px; }
.tray .ime { width: 26px; font-size: 13px; line-height: 16px; color: #222; background: linear-gradient(#fff, #fff) 50% / 15px 15px no-repeat; }
.tray time { padding: 0 9px 0 11px; font-size: 12px; font-weight: 400; }

/* Meeting side panel */
.panel { display: flex; flex-direction: column; background: #fff; font-family: "Open Sans", "Noto Sans CJK KR", sans-serif; font-weight: 350; color: #33333e; }
.phead { position: relative; height: 54px; display: flex; align-items: center; justify-content: center; padding-left: 3px; }
.phead button { position: absolute; left: 22px; color: #6e6e80; }
.phead h2 { font-size: 16px; line-height: 22px; font-weight: 600; color: #3c3c46; }
.find { display: flex; align-items: center; gap: 4px; height: 40px; margin: 0 18px 3px 24px; padding: 0 14px; border: 1px solid #b4b4cc; border-radius: 9px; }
.find svg { width: 17px; height: 17px; }
.find input { flex: 1; min-width: 0; font-size: 17px; }
.find input::placeholder, .compose textarea::placeholder { color: #6c6c7e; opacity: 1; }
.scroller { display: grid; grid-template-columns: minmax(0, 1fr) 10px; }
.bar { background: #f1f1f6; border-radius: 5px; }
.bar i { display: block; background: #afafb9; border-radius: 5px; }
.thumb-a { height: 39px; }
.thumb-b { height: 290px; }
.people ul { list-style: none; height: 199px; overflow: hidden; padding: 0 18px 0 24px; margin-top: -2px; }
.people li { display: flex; align-items: center; gap: 10px; height: 51px; font-size: 16px; }
.av { width: 34px; height: 34px; border-radius: 9px; color: #fff; display: flex; align-items: center; justify-content: center; font-weight: 400; }
.a1 { background: #d35400; }
.a2 { background: #27ae60; }
.a3 { background: #34495e; }
.who { flex: 1; line-height: 24px; padding-left: 4px; font-size: 16px; white-space: nowrap; }
.right { text-align: right; }
.share { width: 20px; height: 16px; margin-left: -6px; }
.minilogo { width: 34px; display: flex; flex-direction: column; align-items: flex-start; font-family: Inter, sans-serif; color: #111; }
.minilogo b { font-size: 10px; line-height: 10px; font-weight: 800; color: #c90008; }
.minilogo strong { font-size: 8px; line-height: 8px; font-weight: 800; }
.minilogo small { font-size: 3px; line-height: 5px; color: #888; }
.acts { display: flex; justify-content: space-between; padding: 22px 53px 18px 57px; }
.acts button { height: 29px; padding: 0 9px; border-radius: 8px; background: #f1f1f6; color: #232333; font-size: 16px; line-height: 24px; }
.chat { border-top: 1px solid #ededf2; }
.chat .phead { height: 57px; padding-bottom: 2px; }
.log { height: 303px; overflow: hidden; padding-left: 24px; }
.log article { margin-bottom: 16px; }
.log h3 { font-size: 16px; line-height: 22px; font-weight: 350; color: #6a6a80; }
.log h3 a { color: #0e72ed; }
.log p { font-size: 19px; line-height: 33px; font-weight: 350; }
.log .from { display: inline-block; width: 90px; }
.compose { flex: 1; display: flex; flex-direction: column; border-top: 1px solid #e8e8f0; margin-top: 3px; padding: 14px 16px 0 21px; }
.to { display: flex; align-items: center; height: 31px; font-size: 16px; }
.tosel { display: flex; align-items: center; height: 29px; padding: 0 8px 0 15px; gap: 8px; margin-left: 11px; background: #f1f1f6; border-radius: 8px; color: #232333; }
.file { margin-left: auto; gap: 12px; }
.file svg { width: 18px; height: 20px; }
.dots { width: 30px; height: 30px; margin-left: 27px; border: 1px solid #dedee8; border-radius: 8px; }
.compose textarea { flex: 1; resize: none; margin-top: 7px; padding-left: 1px; font-size: 17px; line-height: 22px; background: linear-gradient(#111, #111) 0 1px / 1px 21px no-repeat; }
```
